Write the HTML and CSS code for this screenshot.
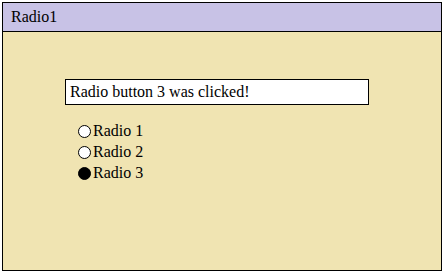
FILE: index.html
```html
<!DOCTYPE html>
<html>
<head>
<meta charset="utf-8">
<link rel="stylesheet" href="styles.css">
</head>
<body>
<div class="window">
  <div class="titlebar">Radio1</div>
  <div class="content">
    <div class="status">Radio button 3 was clicked!</div>
    <div class="radios">
      <label class="radio"><span class="dot"></span>Radio 1</label>
      <label class="radio"><span class="dot"></span>Radio 2</label>
      <label class="radio"><span class="dot on"></span>Radio 3</label>
    </div>
  </div>
</div>
</body>
</html>
```
FILE: styles.css
```css
html, body {
  margin: 0;
  padding: 0;
  background: #ffffff;
  color: #000;
}
.window, .titlebar, .status, .radio {
  font-family: Tinos, "Liberation Serif", "Noto Serif", "DejaVu Serif", FreeSerif, serif;
  font-size: 16px;
}
.window {
  margin: 2px 0 0 2px;
  width: 438px;
  height: 267px;
  border: 1px solid #000;
  background: #f0e4b2;
  display: flex;
  flex-direction: column;
}
.titlebar {
  height: 28px;
  background: #c8c2e6;
  border-bottom: 1px solid #000;
  padding-left: 8px;
  line-height: 28px;
  box-sizing: content-box;
}
.content {
  padding: 47px 0 0 62px;
  display: flex;
  flex-direction: column;
}
.status {
  width: 298px;
  height: 24px;
  border: 1px solid #000;
  background: #fff;
  line-height: 24px;
  padding-left: 4px;
  box-sizing: content-box;
}
.radios {
  margin-top: 17px;
  margin-left: 13px;
  display: flex;
  flex-direction: column;
  gap: 3px;
}
.radio {
  display: flex;
  align-items: center;
  height: 18px;
}
.dot {
  width: 11px;
  height: 11px;
  border: 1px solid #000;
  border-radius: 50%;
  background: #fff;
  margin-right: 2px;
  margin-top: 1px;
}
.dot.on {
  background: #000;
}
```
